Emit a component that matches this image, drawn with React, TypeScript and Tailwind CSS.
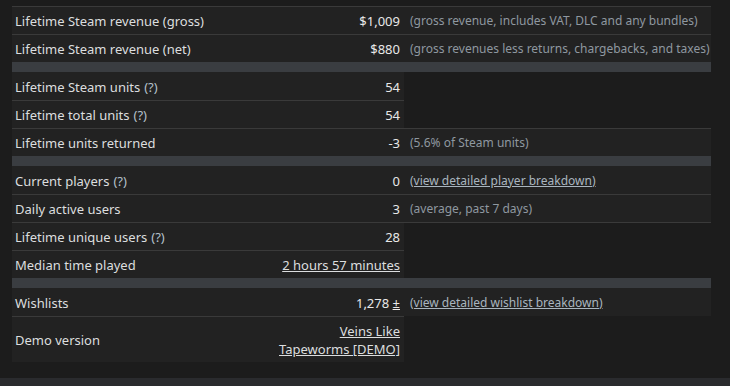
import type { ReactNode } from "react";

type Row = {
  label: string;
  help?: boolean;
  value: ReactNode;
  desc?: ReactNode;
  top?: boolean; // visible border on the label/value part
  descTop?: boolean; // border runs across the description side too
};

const sections: Row[][] = [
  [
    {
      label: "Lifetime Steam revenue (gross)",
      value: "$1,009",
      desc: "(gross revenue, includes VAT, DLC and any bundles)",
      top: true,
      descTop: true,
    },
    {
      label: "Lifetime Steam revenue (net)",
      value: "$880",
      desc: "(gross revenues less returns, chargebacks, and taxes)",
      top: true,
      descTop: true,
    },
  ],
  [
    { label: "Lifetime Steam units", help: true, value: "54" },
    { label: "Lifetime total units", help: true, value: "54", top: true },
    {
      label: "Lifetime units returned",
      value: "-3",
      desc: "(5.6% of Steam units)",
      top: true,
      descTop: true,
    },
  ],
  [
    {
      label: "Current players",
      help: true,
      value: "0",
      desc: <a className="underline text-[#a9b5bf]">(view detailed player breakdown)</a>,
    },
    {
      label: "Daily active users",
      value: "3",
      desc: "(average, past 7 days)",
      top: true,
      descTop: true,
    },
    { label: "Lifetime unique users", help: true, value: "28", top: true, descTop: true },
    {
      label: "Median time played",
      value: <a className="underline whitespace-nowrap text-[#dcdedf]">2 hours 57 minutes</a>,
      top: true,
    },
  ],
  [
    {
      label: "Wishlists",
      value: (
        <span>
          1,278 <a className="underline">±</a>
        </span>
      ),
      desc: <a className="underline text-[#a9b5bf]">(view detailed wishlist breakdown)</a>,
    },
    {
      label: "Demo version",
      value: <a className="underline text-[#dcdedf]">Veins Like Tapeworms [DEMO]</a>,
      top: true,
    },
  ],
];

function StatRow({ row }: { row: Row }) {
  return (
    <div className="flex">
      <div
        className={`flex w-[392px] bg-[#222222] border-t ${
          row.top ? "border-[#3a3a3a]" : "border-[#222222]"
        }`}
      >
        <div className="w-[266px] pl-[3px] flex items-center py-[4.5px] text-[#dcdedf]">
          {row.label}
          {row.help && <span className="ml-[4px] text-[#b4c0ca]">(?)</span>}
        </div>
        <div className="w-[126px] pr-[4px] flex items-center justify-end text-right py-[4.5px] text-[#e8e8e8]">
          {row.value}
        </div>
      </div>
      {(row.desc || row.descTop) && (
        <div
          className={`w-[307px] pl-[6px] flex items-center whitespace-nowrap py-[4.5px] text-[12px] text-[#8f98a0] border-t ${
            row.desc ? "bg-[#222222]" : ""
          } ${row.descTop ? "border-[#3a3a3a]" : "border-[#222222]"}`}
        >
          {row.desc}
        </div>
      )}
    </div>
  );
}

export default function App() {
  return (
    <div
      className="w-[730px] h-[386px] bg-[#1c1c1c] flex flex-col text-[13px] leading-[18px]"
      style={{ fontFamily: '"Noto Sans", "Open Sans", Arial, sans-serif' }}
    >
      <div className="flex-1 pl-[12px] pt-[6px]">
        {sections.map((rows, i) => (
          <div key={i}>
            {i > 0 && <div className="w-[699px] h-[10px] bg-[#3a3d41]" />}
            {rows.map((r) => (
              <StatRow key={r.label} row={r} />
            ))}
          </div>
        ))}
      </div>
      <div className="h-[8px] bg-[#2a2b2e]" />
    </div>
  );
}
